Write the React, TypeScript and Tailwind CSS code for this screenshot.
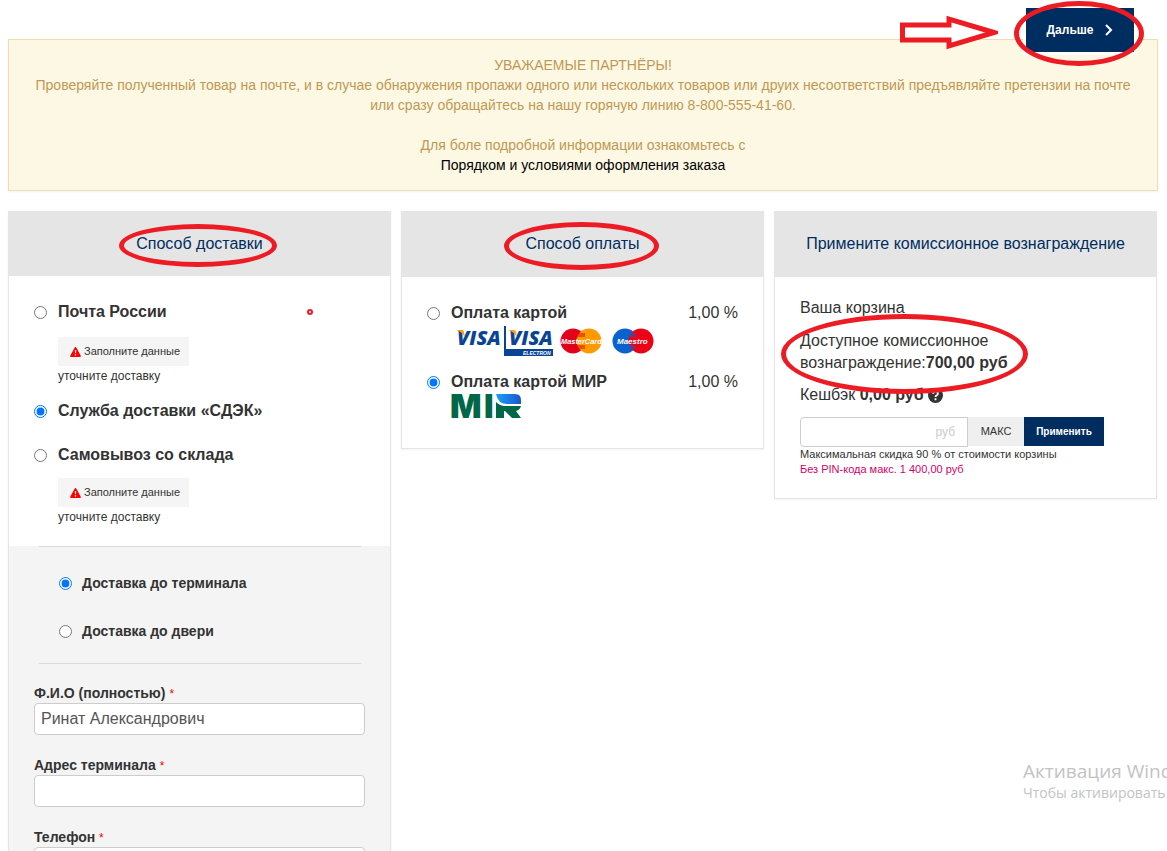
import { useState, type ReactNode } from 'react'

const sans = "font-['Liberation_Sans',Arial,sans-serif]"

function Card({ title, mark, children, headClass = 'h-[65px] pb-[2px]' }: { title: string; mark?: string; children: ReactNode; headClass?: string }) {
  return (
    <section className="min-w-0 border border-[#e5e5e5] bg-white shadow-xs">
      <h2 className={`flex items-center justify-center bg-[#e5e5e5] text-base text-[#002d5f] ${headClass}`}>
        <span className="relative">
          {title}
          {mark && <RedOval className={mark} />}
        </span>
      </h2>
      {children}
    </section>
  )
}

function RedOval({ className }: { className: string }) {
  return <span aria-hidden className={`pointer-events-none absolute z-20 rounded-[50%] border-[5px] border-[#ed1c24] ${className}`} />
}

type RadioProps = {
  name: string
  label: string
  checked: boolean
  onChange: () => void
  small?: boolean
}

function Radio({ name, label, checked, onChange, small }: RadioProps) {
  return (
    <label className={`flex h-5 items-center font-bold text-[#333] ${small ? 'gap-[10px] text-sm' : 'gap-[11px] text-base'}`}>
      <input type="radio" name={name} checked={checked} onChange={onChange} className="m-0 size-[13px] shrink-0" />
      {label}
    </label>
  )
}

function FillData() {
  return (
    <div className="pl-6 text-[#333]">
      <button type="button" className="flex h-[29px] items-center gap-[3px] bg-[#f5f5f5] pr-[9px] pl-3 text-[11px]">
        <svg viewBox="0 0 12 11" className="h-[10px] w-[11px]">
          <path d="M6 0 Q6.6 0 7 .8 L11.8 9.6 Q12.2 11 11 11 H1 Q-.2 11 .2 9.6 L5 .8 Q5.4 0 6 0Z" fill="red" />
          <path d="M5.2 3.5h1.6l-.3 3.4h-1zM5.3 7.9h1.4v1.4H5.3z" fill="#fff" />
        </svg>
        Заполните данные
      </button>
      <p className="text-xs leading-5">уточните доставку</p>
    </div>
  )
}

function Field({ id, label, value = '' }: { id: string; label: string; value?: string }) {
  return (
    <div className="mb-5">
      <label htmlFor={id} className="block h-5 text-sm leading-5 font-bold text-[#333]">
        {label} <span className="text-xs font-normal text-[red]">*</span>
      </label>
      <input
        id={id}
        defaultValue={value}
        className="block h-8 w-full rounded border border-[#ccc] bg-white px-[6px] text-base text-[#555]"
      />
    </div>
  )
}

function CardLogos() {
  return (
    <svg viewBox="0 0 210 32" className="block h-8 w-[210px]" role="img" aria-label="Visa, Visa Electron, MasterCard, Maestro">
      <g fontFamily="Open Sans, sans-serif" fontWeight="800" fontStyle="italic" fill="#0a4595">
        <text x="6" y="19" fontSize="20">VISA</text>
        <text x="58" y="19" fontSize="20">VISA</text>
      </g>
      <path d="M5 4h6q2 0 2 2l1 6q-2-6-9-8zM57 4h6q2 0 2 2l1 6q-2-6-9-8z" fill="#f7a21b" />
      <path d="M53 0h2v23h47v7H53z" fill="#0a4595" />
      <text x="72" y="29" fontSize="5" fontFamily="Liberation Sans, sans-serif" fontWeight="700" fontStyle="italic" fill="#fff">ELECTRON</text>
      <circle cx="122" cy="15" r="12.5" fill="#e2001a" />
      <circle cx="138" cy="15" r="12.5" fill="#f90" />
      <path d="M126 8h8M126 10h8M126 20h8M126 22h8" stroke="#e2001a" />
      <text x="110" y="18" fontSize="7.400" fontFamily="Liberation Sans, sans-serif" fontWeight="700" fontStyle="italic" fill="#fff">MasterCard</text>
      <circle cx="174" cy="15" r="12.5" fill="#0a62ce" />
      <circle cx="190" cy="15" r="12.5" fill="#ec0016" />
      <path d="M178 8h7M178 10h7M178 20h7M178 22h7" stroke="#0a62ce" />
      <text x="166" y="18" fontSize="8" fontFamily="Liberation Sans, sans-serif" fontWeight="700" fontStyle="italic" fill="#fff">Maestro</text>
    </svg>
  )
}

function MirLogo() {
  return (
    <svg viewBox="0 0 70 24" className="block h-6 w-[70px] overflow-visible" role="img" aria-label="MIR">
      <defs>
        <linearGradient id="mir" x1="0" x2="1">
          <stop offset="0" stopColor="#1aa0f5" />
          <stop offset="1" stopColor="#1b57cf" />
        </linearGradient>
      </defs>
      <g fontSize="33" fontFamily="Inter, sans-serif" fontWeight="900" fill="#006848">
        <text x="-1" y="24">M</text>
        <text x="33" y="24">I</text>
      </g>
      <path d="M45 0h19q6 0 6 6v4H56Q47 10 45 0z" fill="url(#mir)" />
      <path d="M45 8q4 4 9 4h16q-1 4-5 5l5 7h-9l-7-7h-1v7h-8z" fill="#006848" />
    </svg>
  )
}

export default function App() {
  const [delivery, setDelivery] = useState('cdek')
  const [target, setTarget] = useState('terminal')
  const [payment, setPayment] = useState('mir')

  return (
    <main className={`relative h-screen overflow-hidden bg-white pr-[9px] pl-2 text-[#333] ${sans}`}>
      <header className="flex h-[39px] items-start justify-end gap-7 pt-2 pr-6">
        <svg viewBox="0 0 100 36" className="relative z-20 mt-[7px] h-9 w-[100px] shrink-0" aria-hidden>
          <path d="M4.500 10H51V4L96 17.500L51 31V25H4.500Z" fill="#fff" stroke="#ed1c24" strokeWidth="5" />
        </svg>
        <div className="relative z-10">
          <button type="button" className="flex h-11 w-[108px] items-center justify-center gap-3 bg-[#002d5f] text-xs font-bold text-white ring-3 ring-white">
            Дальше
            <svg viewBox="0 0 8 12" className="h-3 w-2" fill="none" stroke="currentColor" strokeWidth="2">
              <path d="M1 1l5 5-5 5" />
            </svg>
          </button>
          <RedOval className="-top-[7px] -left-3 h-[65px] w-[130px]" />
        </div>
      </header>

      <div className="border border-[#f0dcae] bg-[#fdf8e4] p-[15px] text-center text-sm leading-5 text-[#c09853] shadow-xs">
        <p>УВАЖАЕМЫЕ ПАРТНЁРЫ!</p>
        <p>
          Проверяйте полученный товар на почте, и в случае обнаружения пропажи одного или нескольких товаров или друих
          несоответствий предъявляйте претензии на почте или сразу обращайтесь на нашу горячую линию 8-800-555-41-60.
        </p>
        <p className="mt-5">Для боле подробной информации ознакомьтесь с</p>
        <a href="#rules" className="text-black">Порядком и условиями оформления заказа</a>
      </div>

      <div className="mt-5 grid grid-cols-[383fr_363fr_383fr] items-start gap-[10px] pr-px">
        <Card title="Способ доставки" mark="-top-2 -left-[17px] h-[43px] w-[158px]" headClass="h-[64px]">
          <div className="px-[25px] pt-[26px] pb-[19px]">
            <div className="flex items-center justify-between pr-[52px]">
              <Radio name="delivery" label="Почта России" checked={delivery === 'post'} onChange={() => setDelivery('post')} />
              <span className="size-[6px] rounded-full border-2 border-[#ed1c24]" />
            </div>
            <div className="mt-[15px]"><FillData /></div>
            <div className="mt-[15px]">
              <Radio name="delivery" label="Служба доставки «СДЭК»" checked={delivery === 'cdek'} onChange={() => setDelivery('cdek')} />
            </div>
            <div className="mt-6">
              <Radio name="delivery" label="Самовывоз со склада" checked={delivery === 'pickup'} onChange={() => setDelivery('pickup')} />
            </div>
            <div className="mt-[13px]"><FillData /></div>
          </div>
          <div className="bg-[#f4f4f4] px-[25px]">
            <div className="mr-1 ml-[5px] border-y border-[#d9dcdf] pt-[26px] pb-[22px] pl-5">
              <Radio small name="target" label="Доставка до терминала" checked={target === 'terminal'} onChange={() => setTarget('terminal')} />
              <div className="mt-7">
                <Radio small name="target" label="Доставка до двери" checked={target === 'door'} onChange={() => setTarget('door')} />
              </div>
            </div>
            <div className="pt-[19px]">
              <Field id="name" label="Ф.И.О (полностью)" value="Ринат Александрович" />
              <Field id="address" label="Адрес терминала" />
              <Field id="phone" label="Телефон" />
            </div>
          </div>
        </Card>

        <Card title="Способ оплаты" mark="-top-[10px] -left-[21px] h-[48px] w-[155px]">
          <div className="px-[25px] pt-[26px] pb-[30px]">
            <div className="flex justify-between">
              <Radio name="payment" label="Оплата картой" checked={payment === 'card'} onChange={() => setPayment('card')} />
              <span className="leading-5">1,00 %</span>
            </div>
            <div className="mt-[3px] pl-6"><CardLogos /></div>
            <div className="mt-[14px] flex justify-between">
              <Radio name="payment" label="Оплата картой МИР" checked={payment === 'mir'} onChange={() => setPayment('mir')} />
              <span className="leading-5">1,00 %</span>
            </div>
            <div className="mt-[2px] pl-6"><MirLogo /></div>
          </div>
        </Card>

        <Card title="Примените комиссионное вознаграждение">
          <div className="px-[25px] pt-5 pb-[21px]">
            <p className="leading-[22px]">Ваша корзина</p>
            <p className="relative mt-[11px] leading-[22px]">
              Доступное комиссионное
              <br />
              вознаграждение:<b>700,00 руб</b>
              <RedOval className="-top-4 -left-[19px] h-[80px] w-[247px]" />
            </p>
            <p className="mt-[10px] flex items-center gap-1 leading-[22px]">
              <span>Кешбэк <b>0,00 руб</b></span>
              <svg viewBox="0 0 16 16" className="size-[15px]" role="img" aria-label="Справка">
                <circle cx="8" cy="8" r="8" fill="#333" />
                <path d="M5.5 6q0-2.500 2.500-2.500T10.500 6q0 1-1.200 1.700Q8 8.400 8 9.500M8 11v2" fill="none" stroke="#fff" strokeWidth="2" />
              </svg>
            </p>
            <div className="mt-[11px] flex h-[30px] items-start">
              <input
                aria-label="Сумма"
                placeholder="руб"
                className="h-[30px] w-[168px] rounded-l border border-[#ccc] px-3 text-right text-xs placeholder:text-[#ccc]"
              />
              <button type="button" className="h-[29px] w-14 bg-[#efefef] text-[11px]">МАКС</button>
              <button type="button" className="h-[29px] w-20 bg-[#002d5f] text-[10px] font-bold text-white">Применить</button>
            </div>
            <p className="text-[11px] leading-[15px]">Максимальная скидка 90 % от стоимости корзины</p>
            <p className="text-[11px] leading-[15px] text-[#d6006d]">Без PIN-кода макс. 1 400,00 руб</p>
          </div>
        </Card>
      </div>

      <div className="absolute right-0 bottom-12 w-36 overflow-hidden font-['Open_Sans','Noto_Sans',sans-serif] whitespace-nowrap text-[#c3c3c3]">
        <p className="text-[19px] leading-6">Активация Windows</p>
        <p className="text-sm leading-5">Чтобы активировать</p>
      </div>
    </main>
  )
}
